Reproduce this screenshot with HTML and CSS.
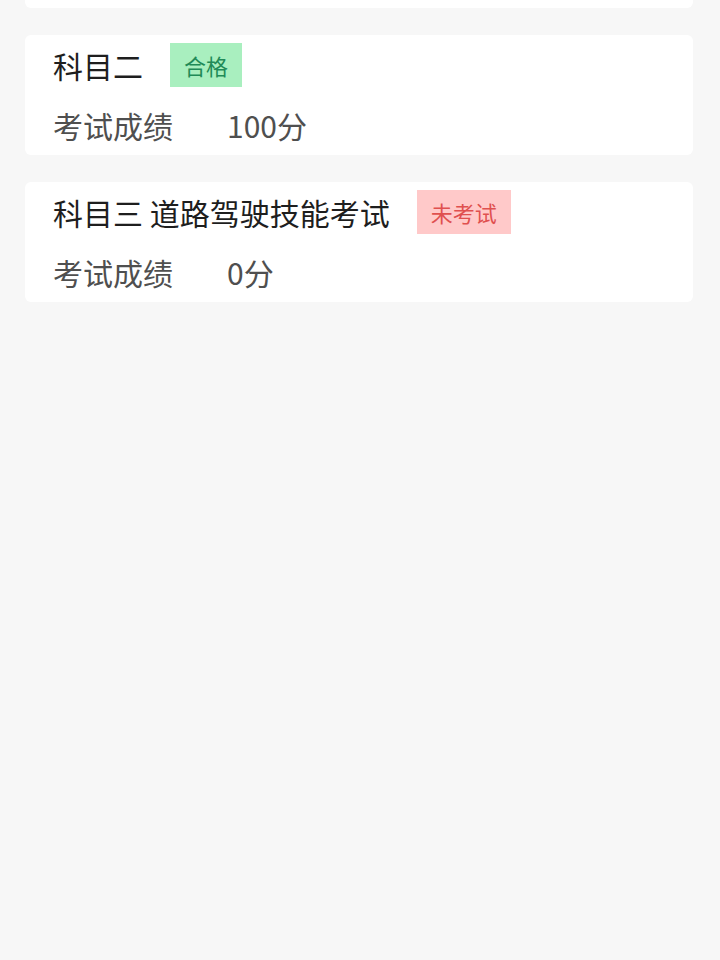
FILE: index.html
```html
<!DOCTYPE html>
<html>
<head>
  <meta charset="utf-8">
  <title>考试成绩</title>
  <link rel="stylesheet" href="styles.css">
</head>
<body>

<div class="exam-list">
  <!-- previous card, scrolled out of view -->
  <div class="exam-card exam-card-hidden"></div>

  <div class="exam-card">
    <div class="exam-head">
      <span class="exam-name">科目二</span>
      <span class="tag tag-pass">合格</span>
    </div>
    <div class="exam-score">
      <span class="score-label">考试成绩</span>
      <span class="score-value">100分</span>
    </div>
  </div>

  <div class="exam-card">
    <div class="exam-head">
      <span class="exam-name">科目三 道路驾驶技能考试</span>
      <span class="tag tag-none">未考试</span>
    </div>
    <div class="exam-score">
      <span class="score-label">考试成绩</span>
      <span class="score-value">0分</span>
    </div>
  </div>
</div>

</body>
</html>
```

FILE: styles.css
```css
html, body {
  margin: 0;
  padding: 0;
  background: #f7f7f7;
  font-family: "Noto Sans CJK SC", "Noto Sans", sans-serif;
}
/* list is scrolled so the first card is mostly hidden */
.exam-list {
  margin-top: -112px;
  padding: 0 27px 0 25px;
}
.exam-card {
  background: #fff;
  border-radius: 6px;
  height: 120px;
  box-sizing: border-box;
  padding: 8px 28px 0;
  margin-bottom: 27px;
}
.exam-head {
  display: flex;
  align-items: center;
  height: 44px;
}
.exam-name {
  font-size: 30px;
  color: #1e1e1e;
  line-height: 44px;
}
.tag {
  margin-left: 27px;
  font-size: 22px;
  line-height: 44px;
  padding: 0 14px;
}
.tag-pass {
  background: #a9efbf;
  color: #218a57;
}
.tag-none {
  background: #ffc9c9;
  color: #e0504f;
}
.exam-score {
  display: flex;
  margin-top: 18px;
  font-size: 30px;
  line-height: 40px;
  color: #4f4f4f;
}
.score-label {
  width: 174px;
}
```
